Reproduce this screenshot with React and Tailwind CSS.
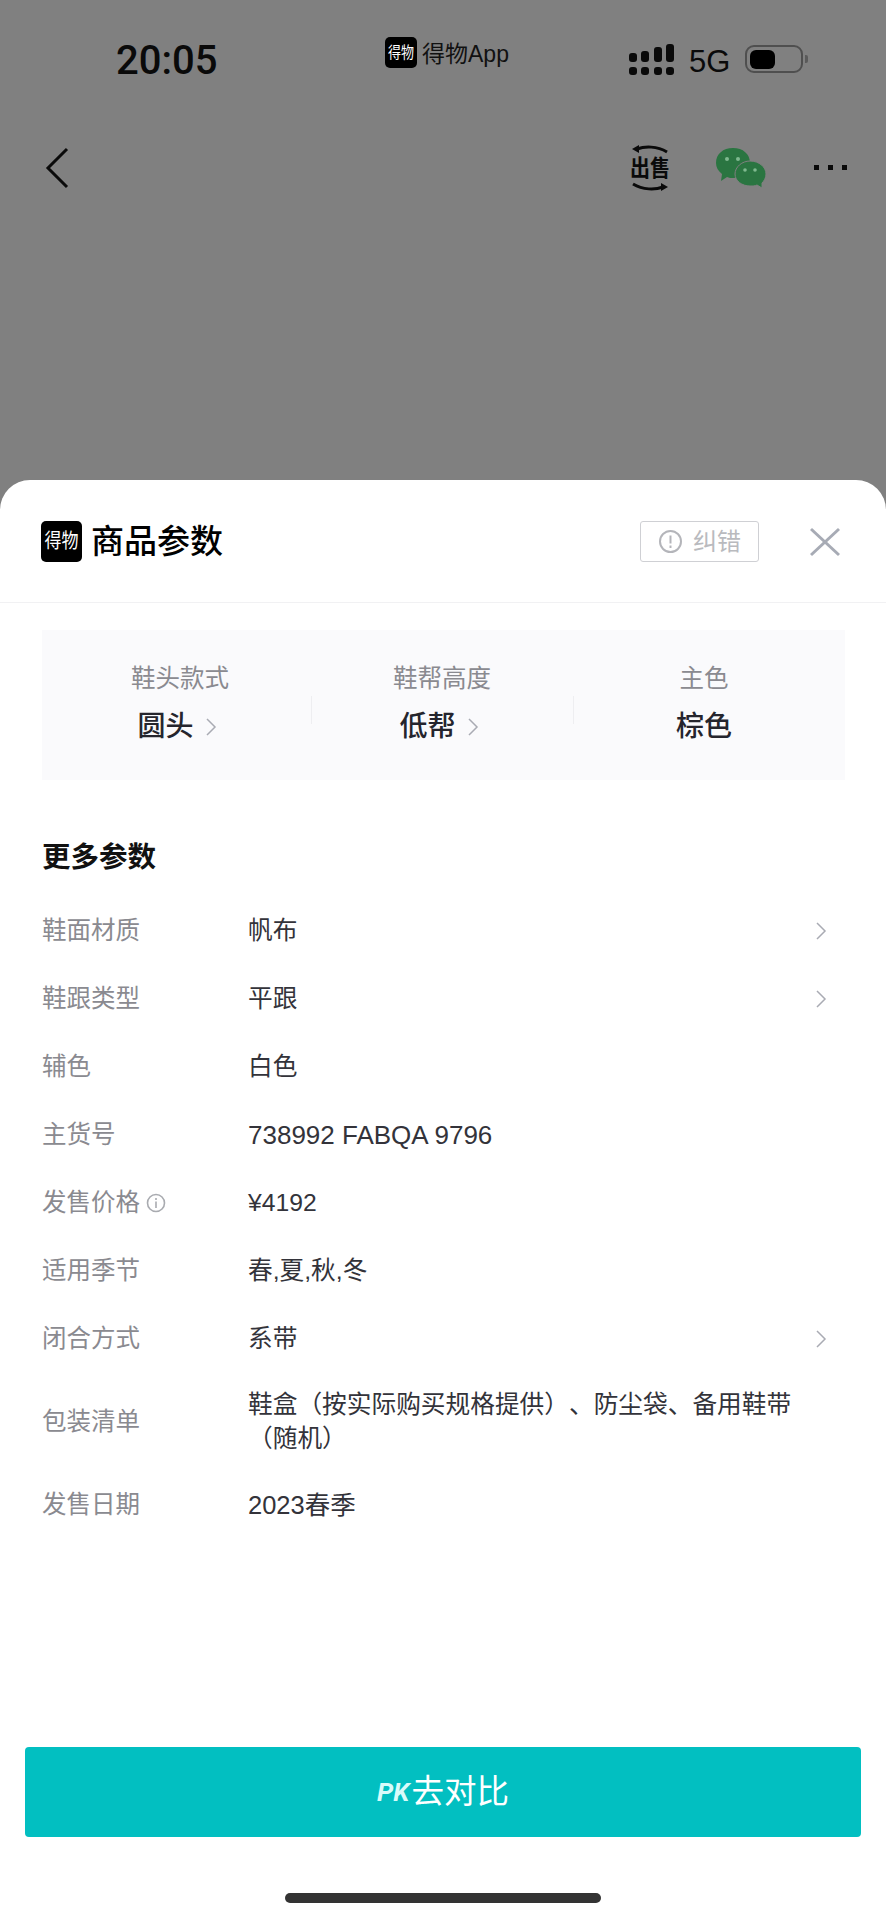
import React from "react";

const Chevron = ({ className }) => (
  <svg className={className} width="12" height="20" viewBox="0 0 12 20" fill="none" stroke="#a9abb3" strokeWidth="1.5">
    <path d="M2 2 L10 10 L2 18" />
  </svg>
);

const Logo = ({ box, text }) => (
  <div className={`flex shrink-0 items-center justify-center overflow-hidden bg-black text-white ${box}`}>
    <span className={`whitespace-nowrap scale-y-[1.2] ${text}`}>得物</span>
  </div>
);

const rows = [
  { label: "鞋面材质", value: "帆布", arrow: true },
  { label: "鞋跟类型", value: "平跟", arrow: true },
  { label: "辅色", value: "白色" },
  { label: "主货号", value: "738992 FABQA 9796", size: "text-[26px]" },
  { label: "发售价格", value: "¥4192", info: true },
  { label: "适用季节", value: "春,夏,秋,冬" },
  { label: "闭合方式", value: "系带", arrow: true },
  { label: "包装清单", value: "鞋盒（按实际购买规格提供）、防尘袋、备用鞋带（随机）", tall: true },
  { label: "发售日期", value: "2023春季", size: "text-[25.5px]" },
];

const highlights = [
  { label: "鞋头款式", value: "圆头", arrow: true },
  { label: "鞋帮高度", value: "低帮", arrow: true },
  { label: "主色", value: "棕色" },
];

export default function App() {
  return (
    <div className="flex h-[1920px] w-[886px] flex-col overflow-hidden bg-[#808080] font-['Liberation_Sans','Noto_Sans_CJK_SC',sans-serif] [text-spacing-trim:space-all]">
      {/* dimmed page behind the sheet */}
      <div className="h-[480px] shrink-0">
        <div className="flex h-[120px] items-start pt-[37px]">
          <div className="ml-[116px] mt-[2px] w-[269px] font-['Roboto',sans-serif] text-[40px] font-medium leading-[44px] text-[#0a0a0a]">20:05</div>
          <Logo box="h-[31px] w-[32px] rounded-[5px]" text="text-[13px]" />
          <div className="ml-[5px] mt-[2px] w-[206px] text-[23px] leading-[30px] text-[#111]">得物App</div>
          <svg width="46" height="32" viewBox="0 0 46 32" className="mt-[7px]" fill="#0a0a0a">
            <rect x="1" y="9" width="8" height="9" rx="3" /><rect x="13" y="7" width="8" height="11" rx="3" />
            <rect x="26" y="3" width="8" height="15" rx="3" /><rect x="38" y="0" width="8" height="18" rx="3" />
            <rect x="1" y="23" width="8" height="8" rx="3" /><rect x="13" y="23" width="8" height="8" rx="3" />
            <rect x="26" y="23" width="8" height="8" rx="3" /><rect x="38" y="23" width="8" height="8" rx="3" />
          </svg>
          <div className="ml-[15px] mt-[7px] w-[40px] text-[31px] leading-[36px] text-[#0a0a0a]">5G</div>
          <div className="ml-[16px] mt-[8px] flex h-[28px] w-[58px] items-center rounded-[9px] border-2 border-[#4f4f4f] px-[3px]">
            <div className="h-[19px] w-[25px] rounded-[6px] bg-black" />
          </div>
          <div className="ml-[2px] mt-[18px] h-[8px] w-[3px] rounded-r-[2px] bg-[#5a5a5a]" />
        </div>
        <div className="flex h-[95px] items-center">
          <svg width="24" height="42" viewBox="0 0 24 42" className="ml-[45px]" fill="none" stroke="#0a0a0a" strokeWidth="3">
            <path d="M22 2 L3 21 L22 40" />
          </svg>
          <div className="ml-[561px] flex h-[46px] w-[40px] flex-col items-center justify-between">
            <svg width="38" height="9" viewBox="0 0 38 9" fill="none" stroke="#0a0a0a" strokeWidth="3">
              <path d="M6 4 C14 1 26 1 36 7" /><path d="M1 4 L8 0 L8 8 Z" fill="#0a0a0a" stroke="none" />
            </svg>
            <span className="whitespace-nowrap scale-y-[1.15] text-[20px] font-bold leading-[22px] text-[#0a0a0a]">出售</span>
            <svg width="38" height="9" viewBox="0 0 38 9" fill="none" stroke="#0a0a0a" strokeWidth="3">
              <path d="M2 2 C12 8 24 8 32 5" /><path d="M37 5 L30 9 L30 1 Z" fill="#0a0a0a" stroke="none" />
            </svg>
          </div>
          <svg width="50" height="40" viewBox="0 0 50 40" className="ml-[46px]">
            <path d="M17 0 C27 0 34 6 34 15 C34 24 27 30 17 30 C15 30 13 30 11 29 L5 33 L6 26 C2 23 0 19 0 15 C0 6 7 0 17 0 Z" fill="#2a7541" />
            <circle cx="11" cy="11" r="2" fill="#7fb98f" /><circle cx="22" cy="11" r="2" fill="#7fb98f" />
            <path d="M34 13 C43 13 50 19 50 26 C50 30 48 33 46 35 L46 40 L41 37 C39 38 37 38 34 38 C26 38 19 33 19 26 C19 19 26 13 34 13 Z" fill="#2a7541" stroke="#808080" strokeWidth="1" />
            <circle cx="29" cy="22" r="1.8" fill="#7fb98f" /><circle cx="39" cy="22" r="1.8" fill="#7fb98f" />
          </svg>
          <div className="ml-[48px] flex items-center gap-[9px]">
            <span className="h-[5px] w-[5px] bg-[#0a0a0a]" /><span className="h-[5px] w-[5px] bg-[#0a0a0a]" /><span className="h-[5px] w-[5px] bg-[#0a0a0a]" />
          </div>
        </div>
      </div>

      {/* sheet */}
      <div className="flex flex-1 flex-col rounded-t-[30px] bg-white">
        <div className="flex h-[123px] shrink-0 items-start border-b border-[#f1f1f3] pl-[41px] pt-[41px]">
          <Logo box="h-[41px] w-[41px] rounded-[5px]" text="text-[17px]" />
          <div className="ml-[9px] w-[549px] text-[33px] font-medium leading-[41px] text-black">商品参数</div>
          <div className="flex h-[41px] w-[119px] shrink-0 items-center justify-center gap-[10px] rounded-[3px] border border-[#cfd0d4]">
            <svg width="25" height="25" viewBox="0 0 25 25" fill="none" stroke="#b4b5ba" strokeWidth="2">
              <circle cx="12.5" cy="12.5" r="10.5" /><path d="M12.5 6.5 V14.5" /><path d="M12.5 16.5 V19" />
            </svg>
            <span className="text-[24px] leading-[30px] text-[#b9babe]">纠错</span>
          </div>
          <svg width="32" height="32" viewBox="0 0 32 32" className="ml-[50px] mt-[5px] shrink-0" fill="none" stroke="#a7abb5" strokeWidth="3">
            <path d="M2 3 L30 29" /><path d="M30 3 L2 29" />
          </svg>
        </div>

        <div className="mx-[42px] mt-[27px] grid h-[150px] w-[803px] shrink-0 grid-cols-[repeat(3,262px)] items-center bg-[#fafafc] pb-[3px] pl-[7px]">
          {highlights.map((h, i) => (
            <div key={h.label} className="relative flex flex-col items-center">
              {i > 0 && <div className="absolute left-0 top-[34px] h-[28px] w-px bg-[#eeeef1]" />}
              <div className="text-[24.5px] leading-[34px] text-[#8a8a90]">{h.label}</div>
              <div className={`mt-[13px] flex items-center text-[28px] font-medium leading-[36px] text-[#25252d] ${h.arrow ? "pr-[6px]" : ""}`}>
                {h.value}
                {h.arrow && <Chevron className="ml-[11px]" />}
              </div>
            </div>
          ))}
        </div>

        <div className="ml-[42px] mt-[59px] text-[28.5px] font-bold leading-[36px] text-[#111]">更多参数</div>

        <div className="mt-[22px] flex flex-col">
          {rows.map((r) => (
            <div key={r.label} className={`flex items-center pl-[42px] ${r.tall ? "h-[98px]" : "h-[68px]"}`}>
              <div className="flex w-[206px] shrink-0 items-center gap-[6px] text-[24.5px] leading-[34px] text-[#8a8a90]">
                {r.label}
                {r.info && (
                  <svg width="20" height="20" viewBox="0 0 20 20" fill="none" stroke="#a9abb0" strokeWidth="1.6">
                    <circle cx="10" cy="10" r="8.5" /><path d="M10 8.5 V15" /><path d="M10 5 V7" />
                  </svg>
                )}
              </div>
              <div className={`w-[555px] leading-[34px] text-[#33333a] ${r.size || "text-[24.7px]"}`}>{r.value}</div>
              {r.arrow && <Chevron className="ml-[12px]" />}
            </div>
          ))}
        </div>

        <div className="flex-1" />
        <div className="mx-[25px] flex h-[90px] shrink-0 items-center justify-center rounded-[4px] bg-[#02bfc1] text-white">
          <span className="font-['Roboto',sans-serif] text-[26px] font-bold italic leading-[40px] text-[#d8fbfa]">PK</span>
          <span className="ml-[2px] text-[32.5px] leading-[40px]">去对比</span>
        </div>
        <div className="mb-[17px] mt-[56px] h-[10px] w-[316px] shrink-0 self-center rounded-full bg-[#333333]" />
      </div>
    </div>
  );
}
